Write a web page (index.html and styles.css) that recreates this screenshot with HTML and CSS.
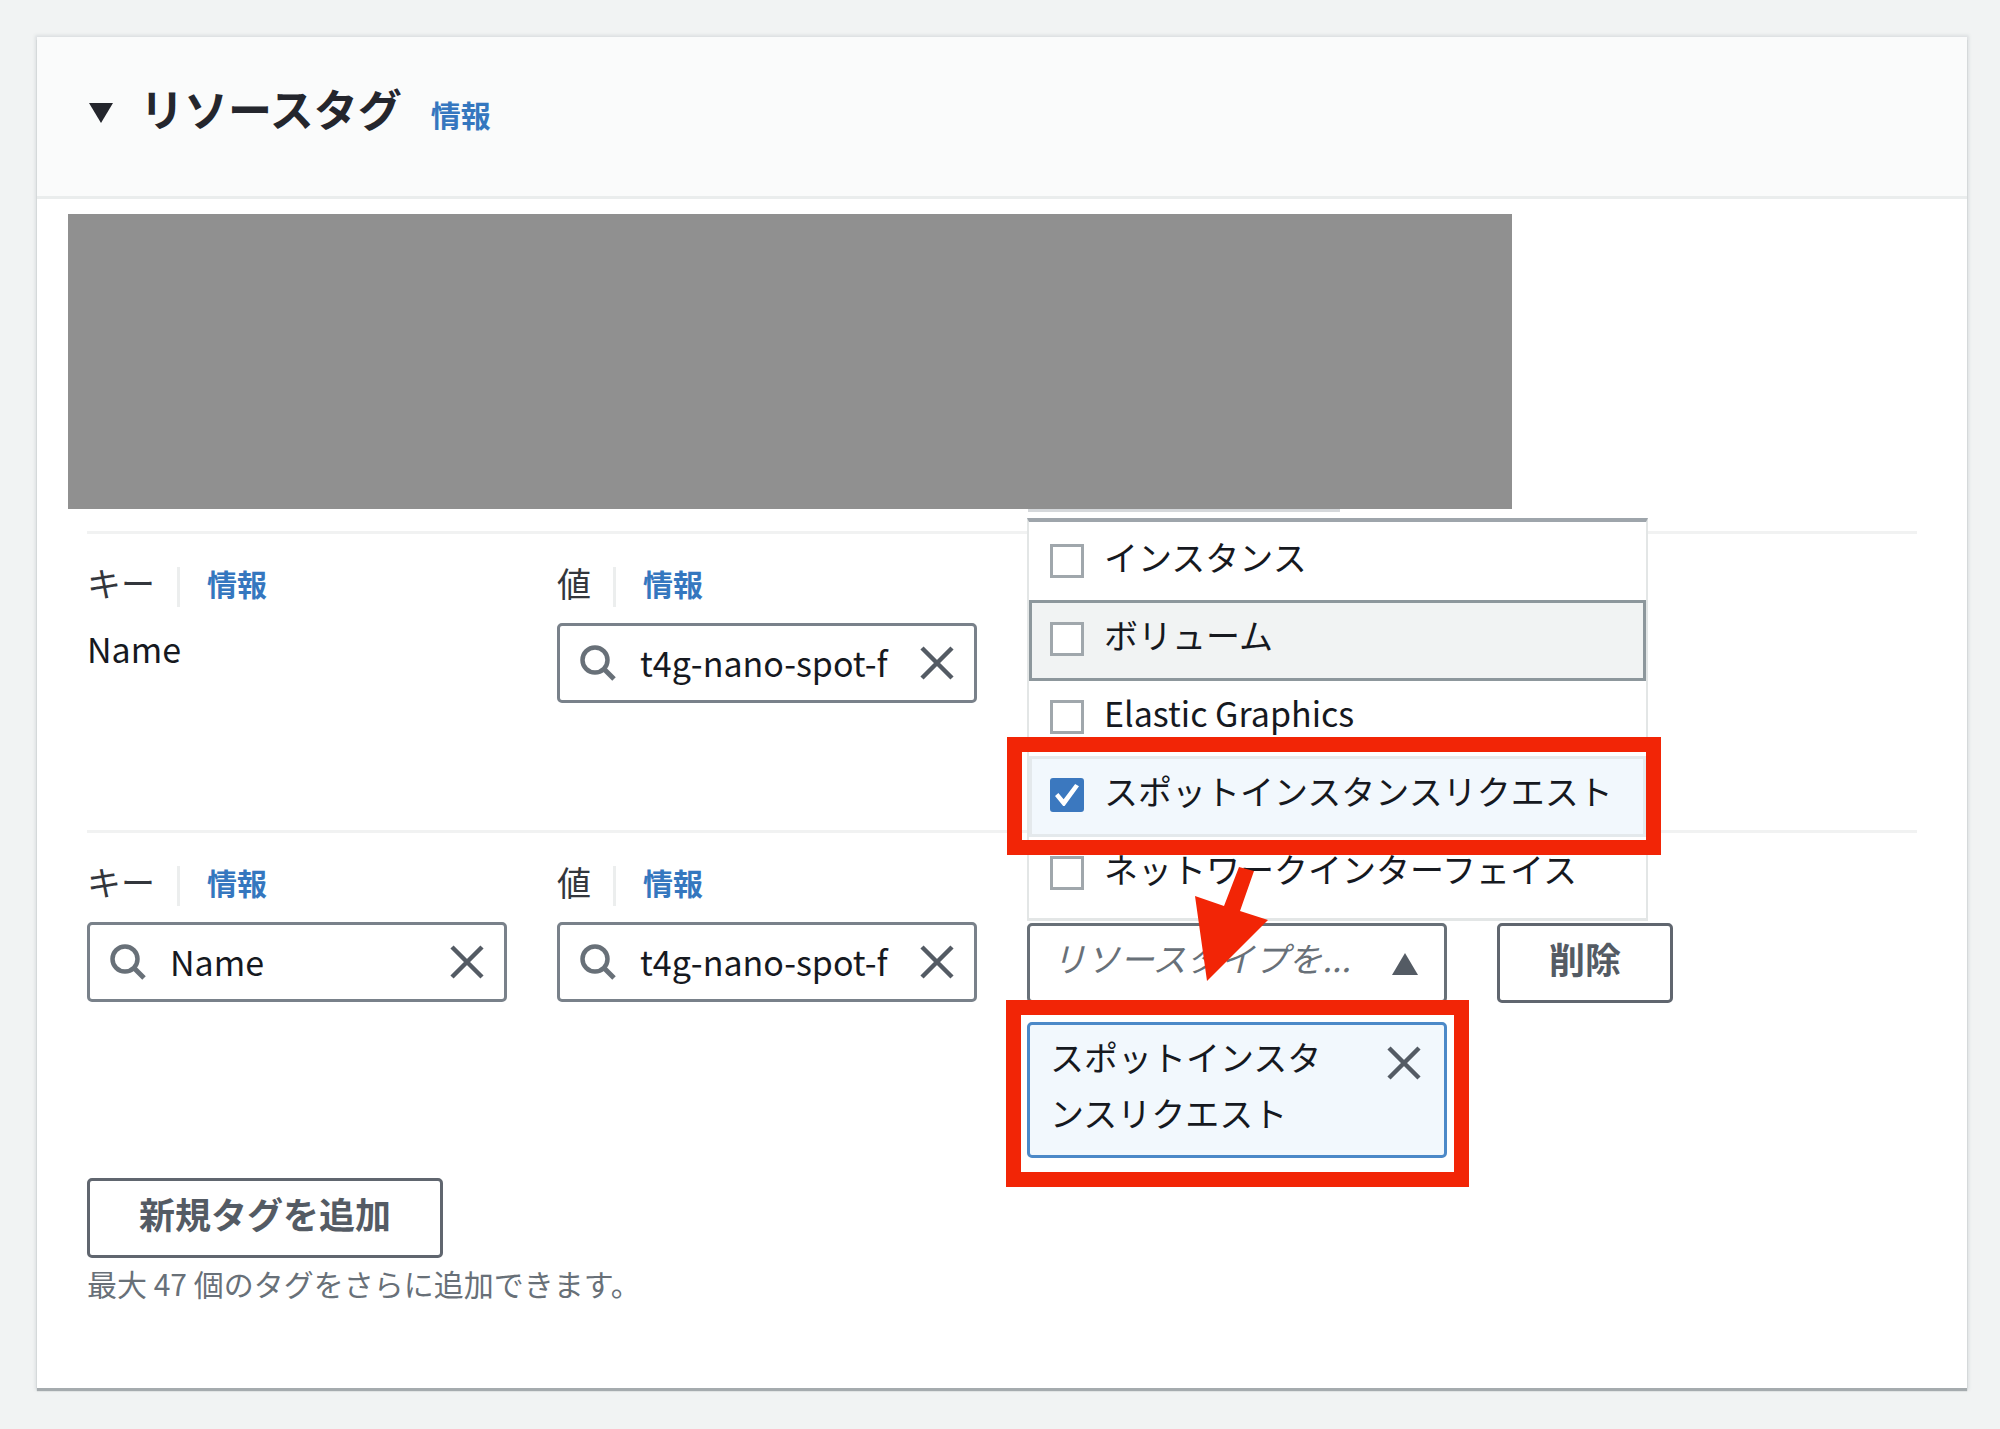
FILE: index.html
```html
<!DOCTYPE html>
<html lang="ja">
<head>
<meta charset="utf-8">
<meta name="viewport" content="width=device-width, initial-scale=1">
<title>リソースタグ</title>
<link rel="stylesheet" href="styles.css">
</head>
<body>
<svg width="0" height="0" class="sprite" aria-hidden="true">
  <symbol id="search" viewBox="0 0 36 36"><circle cx="15" cy="15" r="12.5" fill="none" stroke="currentColor" stroke-width="4.5"/><path d="M24 24L34 34" fill="none" stroke="currentColor" stroke-width="5"/></symbol>
  <symbol id="close" viewBox="0 0 34 34"><path d="M2 2L32 32M32 2L2 32" fill="none" stroke="currentColor" stroke-width="4.5"/></symbol>
</svg>
<main class="page">
  <section class="card">
    <header class="card-header">
      <button class="toggle" type="button" aria-label="折りたたむ"><svg width="24" height="20" viewBox="0 0 24 20"><path d="M0 0H24L12 20Z" fill="currentColor"/></svg></button>
      <h2 class="title">リソースタグ</h2>
      <a class="info" href="#">情報</a>
    </header>
    <div class="masked"></div>
    <div class="rows">
      <div class="row">
        <div class="field">
          <div class="label"><span class="label-text">キー</span><a class="info" href="#">情報</a></div>
          <p class="value">Name</p>
        </div>
        <div class="field">
          <div class="label"><label class="label-text" for="value1">値</label><a class="info" href="#">情報</a></div>
          <div class="search"><svg class="icon-search"><use href="#search"/></svg><input id="value1" type="text" value="t4g-nano-spot-f"><button class="clear" type="button" aria-label="クリア"><svg class="icon-close"><use href="#close"/></svg></button></div>
        </div>
      </div>
      <div class="row">
        <div class="field">
          <div class="label"><label class="label-text" for="key2">キー</label><a class="info" href="#">情報</a></div>
          <div class="search"><svg class="icon-search"><use href="#search"/></svg><input id="key2" type="text" value="Name"><button class="clear" type="button" aria-label="クリア"><svg class="icon-close"><use href="#close"/></svg></button></div>
        </div>
        <div class="field">
          <div class="label"><label class="label-text" for="value2">値</label><a class="info" href="#">情報</a></div>
          <div class="search"><svg class="icon-search"><use href="#search"/></svg><input id="value2" type="text" value="t4g-nano-spot-f"><button class="clear" type="button" aria-label="クリア"><svg class="icon-close"><use href="#close"/></svg></button></div>
        </div>
        <div class="field unlabelled">
          <div class="picker">
            <select class="select" aria-label="リソースタイプ"><option>リソースタイプを...</option></select>
            <svg class="caret" width="26" height="22" viewBox="0 0 26 22"><path d="M0 22H26L13 0Z" fill="currentColor"/></svg>
            <ul class="menu">
              <li class="option"><label><input type="checkbox"><span>インスタンス</span></label></li>
              <li class="option focused"><label><input type="checkbox"><span>ボリューム</span></label></li>
              <li class="option"><label><input type="checkbox"><span>Elastic Graphics</span></label></li>
              <li class="option selected"><label><input type="checkbox" checked><span>スポットインスタンスリクエスト</span></label><div class="mark mark-option"></div></li>
              <li class="option"><label><input type="checkbox"><span>ネットワークインターフェイス</span></label></li>
            </ul>
            <svg class="arrow" width="76" height="116" viewBox="0 0 76 116"><path d="M45 1L60 5L46 45L74 54L13 115L1 30L30 40Z" fill="#f22506"/></svg>
          </div>
          <div class="token"><span class="token-text">スポットインスタンスリクエスト</span><button class="clear" type="button" aria-label="削除"><svg class="icon-close"><use href="#close"/></svg></button><div class="mark mark-token"></div></div>
        </div>
        <div class="field unlabelled"><button class="btn" type="button">削除</button></div>
      </div>
      <button class="btn btn-add" type="button">新規タグを追加</button>
      <p class="hint">最大 47 個のタグをさらに追加できます。</p>
    </div>
  </section>
</main>
</body>
</html>
```
FILE: styles.css
```css
* { box-sizing: border-box; }

body {
  margin: 0;
  background: #f1f3f3;
  color: #16191f;
  font: 34px/56px "Noto Sans CJK JP", "Noto Sans", sans-serif;
}

button, input, select { font: inherit; color: inherit; }
p, h2, ul { margin: 0; padding: 0; }
svg { display: block; flex: none; }
.sprite { position: absolute; }

.page { padding: 37px 33px 36px 37px; }

.card {
  padding-bottom: 85px;
  background: #fff;
  box-shadow: 0 3px 1px #a5abae, 0 0 3px 2px #dcdfe1;
}

.card-header {
  display: flex;
  align-items: flex-start;
  padding: 43px 50px 60px;
  background: #fafbfb;
  border-bottom: 3px solid #eaeded;
}

.toggle {
  padding: 23px 27px 0 2px;
  border: 0;
  background: none;
  color: #24262d;
}

.title { font-size: 44px; line-height: 56px; font-weight: 700; color: #24262d; }

.info {
  color: #3577bf;
  font-size: 30px;
  line-height: 32px;
  font-weight: 700;
  text-decoration: none;
}
.card-header .info { margin: 18px 0 0 29px; }

.masked {
  position: relative;
  width: calc(75% - 4px);
  height: 295px;
  margin: 15px 0 22px 31px;
  background: #909090;
}
.masked::after {
  content: "";
  position: absolute;
  top: 100%;
  right: 172px;
  width: 312px;
  height: 3px;
  background: #d5d8db;
}

.rows { padding: 0 50px; }

.row {
  display: grid;
  grid-template-columns: repeat(4, minmax(0, 1fr));
  gap: 50px;
  min-height: 299px;
  padding: 33px 0 20px;
  border-top: 3px solid #f1f2f2;
}

.label {
  display: flex;
  height: 40px;
  margin-bottom: 16px;
}
.label-text {
  padding-right: 22px;
  border-right: 3px solid #eceeee;
  line-height: 32px;
  color: #33363c;
}
.label .info { margin-left: 27px; }
.unlabelled { padding-top: 57px; }

.value { line-height: 52px; }

.search {
  display: flex;
  align-items: center;
  height: 80px;
  padding: 0 20px;
  border: 3px solid #79818a;
  border-radius: 5px;
}
.search input {
  flex: 1;
  min-width: 0;
  padding: 0;
  margin-left: 24px;
  border: 0;
  outline: 0;
  background: none;
}
.icon-search { width: 36px; height: 36px; color: #687078; }
.icon-close { width: 34px; height: 34px; }
.clear { padding: 0; border: 0; background: none; color: #545b64; }

.picker { position: relative; }
.select {
  display: block;
  width: 100%;
  height: 80px;
  padding: 0 70px 10px 22px;
  border: 3px solid #687078;
  border-radius: 5px;
  background: #fff;
  color: #687078;
  font-style: italic;
  appearance: none;
}
.caret { position: absolute; top: 30px; right: 29px; color: #545b64; }

.menu {
  position: absolute;
  left: 0;
  bottom: 100%;
  width: 621px;
  margin-bottom: 2px;
  padding-bottom: 3px;
  border: 2px solid #e3e6e6;
  border-top: 4px solid #9ea5ab;
  border-bottom-width: 3px;
  background: #fff;
  list-style: none;
}
.option {
  position: relative;
  height: 81px;
  border: 3px solid transparent;
}
.option + .option { margin-top: -3px; }
.option label {
  display: flex;
  align-items: center;
  gap: 20px;
  padding-left: 18px;
  height: 72px;
}
.option span { line-height: 64px; height: 72px; white-space: nowrap; }
.option input {
  display: grid;
  place-items: center;
  width: 34px;
  height: 34px;
  margin: 0;
  border: 3px solid #a0a7ac;
  background: #fff;
  appearance: none;
}
.option input:checked { background: #3b78bf; border-color: #3b78bf; border-radius: 3px; }
.option input:checked::before {
  content: "";
  width: 24px;
  height: 24px;
  background: #fff;
  clip-path: polygon(0 54%, 14% 42%, 36% 68%, 84% 4%, 100% 14%, 40% 96%, 34% 96%);
}
.focused { background: #f1f3f3; border-color: #8d979c; z-index: 1; }
.selected { background: #f2f8fd; border-color: #e4e9ec; z-index: 2; }

/* Red call-outs drawn over the form */
.mark { position: absolute; border: 15px solid #f22506; pointer-events: none; }
.mark-option { inset: -22px -18px -21px -25px; }
.mark-token { inset: -25px -25px -32px -24px; }
.arrow { position: absolute; left: 167px; top: -57px; z-index: 3; }

.token {
  position: relative;
  display: flex;
  align-items: flex-start;
  justify-content: space-between;
  margin-top: 19px;
  padding: 4px 23px 14px 20px;
  border: 3px solid #4c89c8;
  border-radius: 5px;
  background: #f2f8fd;
}
.token-text { width: 280px; }
.token .clear { margin-top: 17px; }

.btn {
  height: 80px;
  padding: 0 49px 10px;
  border: 3px solid #60666f;
  border-radius: 5px;
  background: #fff;
  color: #545b64;
  font-size: 36px;
  font-weight: 700;
}
.btn-add { display: block; }

.hint { margin-top: 5px; font-size: 30px; line-height: 40px; color: #687078; }
```
